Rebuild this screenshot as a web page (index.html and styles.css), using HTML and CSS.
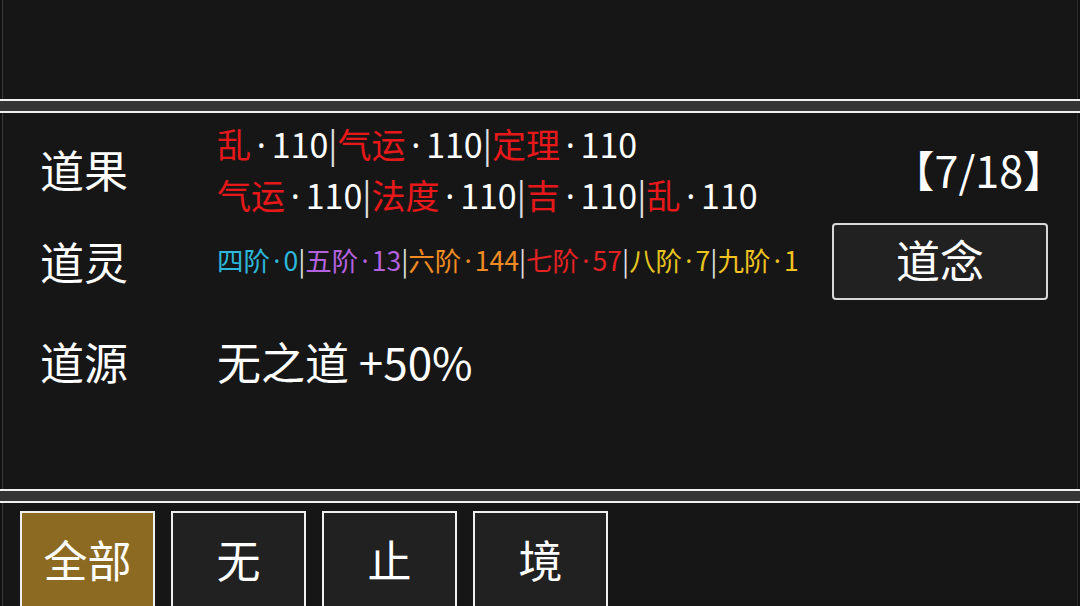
FILE: index.html
```html
<!DOCTYPE html>
<html lang="zh">
<head>
<meta charset="utf-8">
<link rel="stylesheet" href="styles.css">
</head>
<body>
<div class="screen">
  <div class="panel top"></div>
  <div class="divider"></div>
  <div class="panel main">
    <div class="row row-guo">
      <div class="label">道果</div>
      <div class="value guo">
        <div class="line"><span class="r">乱</span><span class="d">·</span>110<span class="sep">|</span><span class="r">气运</span><span class="d">·</span>110<span class="sep">|</span><span class="r">定理</span><span class="d">·</span>110</div>
        <div class="line"><span class="r">气运</span><span class="d">·</span>110<span class="sep">|</span><span class="r">法度</span><span class="d">·</span>110<span class="sep">|</span><span class="r">吉</span><span class="d">·</span>110<span class="sep">|</span><span class="r">乱</span><span class="d">·</span>110</div>
      </div>
      <div class="count">【7/18】</div>
    </div>
    <div class="row row-ling">
      <div class="label">道灵</div>
      <div class="value ling"><span class="c4">四阶<span class="d">·</span>0</span><span class="sep">|</span><span class="c5">五阶<span class="d">·</span>13</span><span class="sep">|</span><span class="c6">六阶<span class="d">·</span>144</span><span class="sep">|</span><span class="c7">七阶<span class="d">·</span>57</span><span class="sep">|</span><span class="c8">八阶<span class="d">·</span>7</span><span class="sep">|</span><span class="c9">九阶<span class="d">·</span>1</span></div>
      <button class="nian">道念</button>
    </div>
    <div class="row row-yuan">
      <div class="label">道源</div>
      <div class="value yuan">无之道 +50%</div>
    </div>
  </div>
  <div class="divider"></div>
  <div class="panel bottom">
    <div class="tab active">全部</div>
    <div class="tab">无</div>
    <div class="tab">止</div>
    <div class="tab">境</div>
  </div>
</div>
</body>
</html>
```
FILE: styles.css
```css
html, body {
  margin: 0;
  padding: 0;
  background: #111;
  overflow: hidden;
}
.screen {
  width: 1080px;
  height: 606px;
  display: flex;
  flex-direction: column;
  font-family: "Noto Sans CJK SC", "Noto Sans", sans-serif;
  color: #fff;
}
.panel {
  background: #161616;
  margin-left: 2px;
  margin-right: 2px;
  border-left: 1px solid #3c3c3c;
  border-right: 1px solid #2a2a2a;
}
.top {
  height: 99px;
}
.divider {
  height: 10px;
  background: #353535;
  border-top: 2px solid #f0f0f0;
  border-bottom: 2px solid #f0f0f0;
}
.main {
  height: 376px;
  padding: 6px 29px 0 37px;
  box-sizing: border-box;
}
.row {
  display: flex;
  align-items: center;
}
.label {
  width: 177px;
  font-size: 44px;
  line-height: 1;
  flex: none;
}
.value {
  flex: 1;
}
.guo {
  font-size: 34px;
  line-height: 50px;
  height: 100px;
}
.d {
  font-family: "Noto Sans", sans-serif;
  padding: 0 0.17em;
}
.r { color: #e8181a; }
.sep { color: #ddd; }
.count {
  font-size: 43px;
  line-height: 1;
  margin-right: -18px;
}
.row-ling {
  height: 84px;
}
.ling {
  font-size: 26.5px;
  line-height: 1;
}
.ling .d {
  padding: 0 0.12em;
}
.c4 { color: #2bb8dc; }
.c5 { color: #b461e0; }
.c6 { color: #f08a22; }
.c7 { color: #e42222; }
.c8 { color: #e6c41e; }
.c9 { color: #f2c21e; }
.nian {
  width: 216px;
  height: 77px;
  background: #212121;
  border: 2px solid #d8d8d8;
  border-radius: 4px;
  color: #fff;
  font-family: inherit;
  font-size: 44px;
  line-height: 1;
  padding: 0 0 4px;
}
.row-yuan {
  margin-top: 28px;
  height: 60px;
}
.yuan {
  font-size: 44px;
  line-height: 1;
}
.bottom {
  flex: 1;
  display: flex;
  gap: 16px;
  padding: 8px 0 0 17px;
  overflow: hidden;
}
.tab {
  flex: none;
  width: 135px;
  height: 102px;
  box-sizing: border-box;
  border: 2px solid #f0f0f0;
  background: #212121;
  display: flex;
  align-items: center;
  justify-content: center;
  font-size: 44px;
  line-height: 1;
  padding-bottom: 6px;
}
.tab.active {
  background: #8c6a22;
}
```
